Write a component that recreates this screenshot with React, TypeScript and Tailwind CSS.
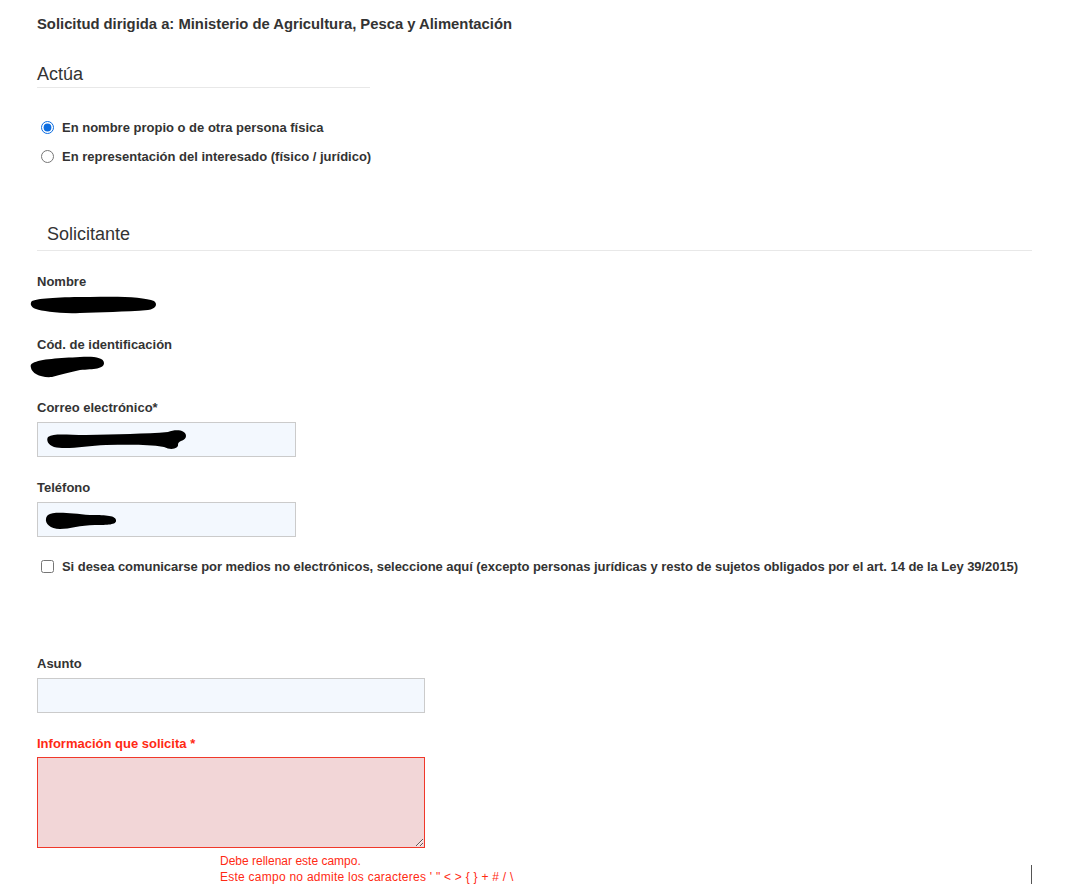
const Redacted = ({ w, h, d }: { w: number; h: number; d: string }) => (
  <svg width={w} height={h} viewBox={`0 0 ${w} ${h}`} className="block">
    <path d={d} fill="#000" />
  </svg>
);

const Label = ({ children }: { children: React.ReactNode }) => (
  <label className="block text-[13px] font-bold leading-[16px] text-[#333]">
    {children}
  </label>
);

const App = () => {
  return (
    <div className="h-[891px] overflow-hidden bg-white font-['Liberation_Sans',Arial,sans-serif] text-[#333]">
      <div className="w-[1032px] pl-[37px] pt-[16px]">
        <h2 className="text-[14.8px] font-bold leading-[17px] text-[#333]">
          Solicitud dirigida a: Ministerio de Agricultura, Pesca y Alimentación
        </h2>

        {/* Actúa */}
        <div className="mt-[31px] w-[333px] border-b border-[#e8e8e8] pb-[2px]">
          <h3 className="text-[18px] leading-[21px] text-[#333]">Actúa</h3>
        </div>
        <div className="mt-[31px] flex flex-col gap-[12px] pl-[4px]">
          <label className="flex items-center gap-[8px] text-[13px] font-bold leading-[17px]">
            <input type="radio" name="actua" defaultChecked className="m-0 h-[13px] w-[13px] accent-[#0b6ce0]" />
            En nombre propio o de otra persona física
          </label>
          <label className="flex items-center gap-[8px] text-[13px] font-bold leading-[17px]">
            <input type="radio" name="actua" className="m-0 h-[13px] w-[13px]" />
            En representación del interesado (físico / jurídico)
          </label>
        </div>

        {/* Solicitante */}
        <div className="mt-[59px] border-b border-[#e8e8e8] pb-[5px] pl-[10px]">
          <h3 className="text-[18px] leading-[21px] text-[#333]">Solicitante</h3>
        </div>

        <div className="mt-[23px]">
          <Label>Nombre</Label>
          <div className="-ml-[7px] mt-[5px]">
            <Redacted
              w={128}
              h={19}
              d="M2 6 C10 3 30 2 60 2 C90 1 115 2 124 6 C128 9 126 14 118 15 C95 17 70 17 50 18 C30 19 12 16 6 14 C0 12 0 8 2 6 Z"
            />
          </div>
        </div>

        <div className="mt-[23px]">
          <Label>Cód. de identificación</Label>
          <div className="-ml-[7px] mt-[2px]">
            <Redacted
              w={76}
              h={24}
              d="M3 8 C10 4 30 3 50 2 C62 1 74 2 74 8 C74 14 64 14 50 15 C40 17 30 20 22 22 C10 23 2 18 1 13 C0 10 1 9 3 8 Z"
            />
          </div>
        </div>

        <div className="mt-[21px]">
          <Label>Correo electrónico*</Label>
          <div className="mt-[6px] flex h-[35px] w-[259px] items-center border border-[#cbcbcb] bg-[#f3f8fe] pl-[8px]">
            <Redacted
              w={140}
              h={24}
              d="M2 9 C8 5 20 7 40 7 C70 6 100 6 122 4 C130 1 140 2 140 8 C140 13 133 12 132 16 C133 20 126 23 118 19 C100 16 80 17 60 17 C40 18 20 22 8 19 C2 17 0 12 2 9 Z"
            />
          </div>
        </div>

        <div className="mt-[23px]">
          <Label>Teléfono</Label>
          <div className="mt-[6px] flex h-[35px] w-[259px] items-center border border-[#cbcbcb] bg-[#f3f8fe] pl-[7px]">
            <Redacted
              w={72}
              h={22}
              d="M3 6 C8 2 25 4 45 6 C58 6 70 6 71 11 C72 16 62 16 50 16 C35 16 25 20 15 20 C5 20 0 14 1 10 C1 8 2 7 3 6 Z"
            />
          </div>
        </div>

        <label className="mt-[21px] flex items-center gap-[8px] whitespace-nowrap pl-[4px] text-[13px] font-bold leading-[17px] tracking-[-0.05px]">
          <input type="checkbox" className="m-0 h-[13px] w-[13px]" />
          Si desea comunicarse por medios no electrónicos, seleccione aquí (excepto personas jurídicas y resto de sujetos obligados por el art. 14 de la Ley 39/2015)
        </label>

        <div className="mt-[81px]">
          <Label>Asunto</Label>
          <input
            type="text"
            className="mt-[6px] block h-[35px] w-[388px] border border-[#cbcbcb] bg-[#f3f8fe] outline-none"
          />
        </div>

        <div className="mt-[23px]">
          <label className="block text-[13px] font-bold leading-[16px] text-[#ff2a14]">
            Información que solicita *
          </label>
          <textarea className="mt-[5px] block h-[91px] w-[388px] resize border border-[#f0382a] bg-[#f2d6d7] outline-none" />
          <div className="mt-[5px] flex items-start">
            <div className="ml-[183px] text-[12px] leading-[16px] text-[#ff2a14]">
              <p>Debe rellenar este campo.</p>
              <p className="tracking-[0.25px]">Este campo no admite los caracteres &#39; &quot; &lt; &gt; {"{"} {"}"} + # / \</p>
            </div>
            <div className="ml-auto mt-[12px] h-[19px] w-px bg-[#555]" />
          </div>
        </div>
      </div>
    </div>
  );
};

export default App;
